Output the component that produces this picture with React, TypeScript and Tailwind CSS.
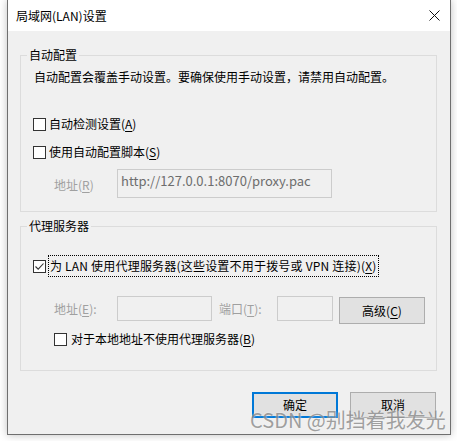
import type { ReactNode } from "react"

function Box({ checked = false }: { checked?: boolean }) {
  return (
    <span className="flex h-[13px] w-[13px] shrink-0 items-center justify-center border border-[#333333] bg-white">
      {checked && (
        <svg width="11" height="11" viewBox="0 0 11 11" fill="none">
          <path d="M1.5 5.5 L4.2 8.2 L9.5 2.5" stroke="#333333" strokeWidth="1.1" />
        </svg>
      )}
    </span>
  )
}

function Key({ children }: { children: ReactNode }) {
  return <span className="underline underline-offset-2">{children}</span>
}

function Legend({ children }: { children: ReactNode }) {
  return <legend className="ml-[6px] px-[2px] text-[12px] leading-[16px] text-black">{children}</legend>
}

export default function App() {
  return (
    <div
      className="relative h-[441px] w-[457px] overflow-hidden bg-white text-[12px] text-black"
      style={{ fontFamily: '"Noto Sans CJK SC", "Noto Sans", sans-serif' }}
    >
      <div className="ml-[7px] w-[444px] border-x border-b border-[#6f6f6f] bg-[#f0f0f0] shadow-[0_0_8px_rgba(0,0,0,0.25)]">
        {/* Title bar */}
        <div className="flex h-[31px] items-center justify-between bg-white pl-[8px] pr-[10px]">
          <span className="leading-none">局域网(LAN)设置</span>
          <svg width="11" height="11" viewBox="0 0 11 11" fill="none">
            <path d="M0.5 0.5 L10.5 10.5 M10.5 0.5 L0.5 10.5" stroke="#111" strokeWidth="1" />
          </svg>
        </div>

        <div className="pl-[12px] pr-[13px] pt-[16px]">
          {/* Automatic configuration */}
          <fieldset className="border border-[#dcdcdc] pb-[13px]">
            <Legend>自动配置</Legend>
            <div className="flex h-[28px] items-center pl-[13px]">
              自动配置会覆盖手动设置。要确保使用手动设置，请禁用自动配置。
            </div>
            <div className="mt-[23px] flex h-[20px] items-center gap-[3px] pl-[12px]">
              <Box />
              <span>
                自动检测设置(<Key>A</Key>)
              </span>
            </div>
            <div className="mt-[8px] flex h-[20px] items-center gap-[3px] pl-[12px]">
              <Box />
              <span>
                使用自动配置脚本(<Key>S</Key>)
              </span>
            </div>
            <div className="mt-[7px] flex h-[29px] items-center pl-[33px]">
              <span className="w-[63px] pt-[3px] text-[#a0a0a0]">
                地址(<Key>R</Key>)
              </span>
              <div className="h-[29px] w-[215px] border border-[#cccccc] bg-[#f0f0f0] pl-[3px] pt-[3px] text-[13px] leading-[16px] text-[#6d6d6d]">
                http://127.0.0.1:8070/proxy.pac
              </div>
            </div>
          </fieldset>

          {/* Proxy server */}
          <fieldset className="mt-[6px] border border-[#dcdcdc] pb-[22px]">
            <Legend>代理服务器</Legend>
            <div className="mt-[21px] flex h-[22px] items-center gap-[2px] pl-[12px]">
              <Box checked />
              <span className="flex h-[22px] items-center border border-dotted border-black px-[1px] tracking-[0.2px]">
                为 LAN 使用代理服务器(这些设置不用于拨号或 VPN 连接)(<Key>X</Key>)
              </span>
            </div>
            <div className="mt-[19px] flex items-start pl-[33px]">
              <span className="flex h-[25px] w-[63px] items-center text-[#a0a0a0]">
                地址(<Key>E</Key>):
              </span>
              <div className="h-[25px] w-[95px] border border-[#cccccc] bg-[#f0f0f0]" />
              <span className="ml-[7px] flex h-[25px] w-[58px] items-center text-[#a0a0a0]">
                端口(<Key>T</Key>):
              </span>
              <div className="h-[25px] w-[56px] border border-[#cccccc] bg-[#f0f0f0]" />
              <button className="ml-[6px] mt-[1px] flex h-[27px] w-[86px] items-center justify-center border border-[#adadad] bg-[#e1e1e1]">
                <span>
                  高级(<Key>C</Key>)
                </span>
              </button>
            </div>
            <div className="mt-[6px] flex h-[18px] items-center gap-[4px] pl-[33px]">
              <Box />
              <span>
                对于本地地址不使用代理服务器(<Key>B</Key>)
              </span>
            </div>
          </fieldset>
        </div>

        {/* Dialog buttons */}
        <div className="mt-[21px] flex justify-end gap-[12px] pb-[16px] pr-[14px]">
          <button className="flex h-[26px] w-[86px] items-center justify-center border-2 border-[#0078d7] bg-[#e1e1e1]">
            确定
          </button>
          <button className="flex h-[26px] w-[86px] items-center justify-center border border-[#adadad] bg-[#e1e1e1]">
            取消
          </button>
        </div>
      </div>

      {/* Watermark */}
      <div className="pointer-events-none absolute left-[250px] top-[408px] text-[20px] leading-[24px] text-[#8c8c8c] opacity-80 [text-shadow:0_0_2px_#ffffff]">
        CSDN @别挡着我发光
      </div>
    </div>
  )
}
